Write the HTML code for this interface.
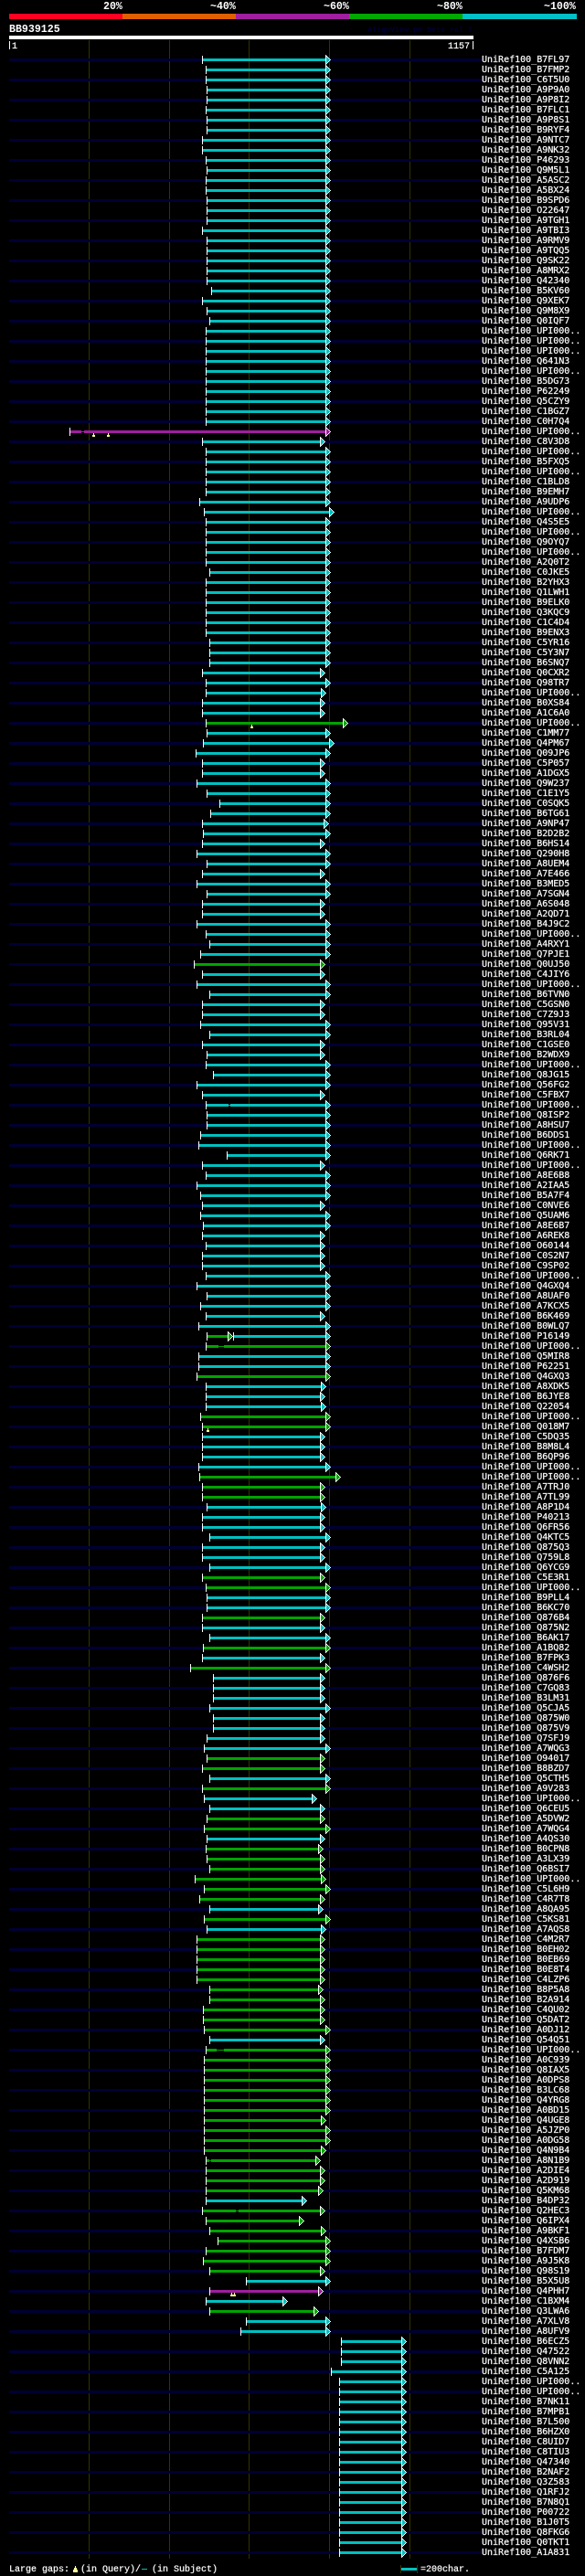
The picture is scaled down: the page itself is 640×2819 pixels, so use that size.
<!DOCTYPE html>
<html>
<head>
<meta charset="utf-8">
<style>
html,body{margin:0;padding:0;background:#000}
body{position:relative;width:640px;height:2819px;overflow:hidden;font-family:"Liberation Mono",monospace;color:#fff}
.a{position:absolute}
.h{position:absolute;font-weight:bold;font-size:11.6px;line-height:13px;white-space:pre}
.n{position:absolute;font-size:10px;line-height:11px;white-space:pre;-webkit-text-stroke:.2px #fff}
.gl{position:absolute;top:44px;height:2756px;width:1px;background:#333300}
#bands{position:absolute;left:10px;top:64px;width:517px;height:2732px;background:repeating-linear-gradient(#000033 0,#000033 3px,transparent 3px,transparent 22px)}
svg{position:absolute;left:0;top:0;shape-rendering:crispEdges}
svg path{fill:none;stroke:#00c0c0;stroke-width:3;marker-start:url(#t);marker-end:url(#ac)}
svg path.g{stroke:#00a400;marker-end:url(#ag)}
svg path.p{stroke:#a01ea0;marker-end:url(#ap)}
svg path.x{stroke:#000;marker:none}
svg path.y{stroke-width:1;marker:none}
svg path.yg{stroke:#00a400;stroke-width:1;marker:none}
svg path.yp{stroke:#a01ea0;stroke-width:1;marker:none}
svg .q{fill:#ffff99}
</style>
</head>
<body>
<div class="h" style="left:113px;top:1px">20%</div>
<div class="h" style="left:230px;top:1px">~40%</div>
<div class="h" style="left:354px;top:1px">~60%</div>
<div class="h" style="left:478px;top:1px">~80%</div>
<div class="h" style="left:595px;top:1px">~100%</div>
<div class="a" style="left:10px;top:15px;width:124px;height:6px;background:#ff0020"></div>
<div class="a" style="left:134px;top:15px;width:124px;height:6px;background:#e06000"></div>
<div class="a" style="left:258px;top:15px;width:124px;height:6px;background:#a01ea0"></div>
<div class="a" style="left:382px;top:15px;width:124px;height:6px;background:#00a800"></div>
<div class="a" style="left:506px;top:15px;width:125px;height:6px;background:#00c0c8"></div>
<div class="h" style="left:10px;top:26px">BB939125</div>
<div class="h" style="left:402px;top:27px;color:#000038;font-size:8.33px;letter-spacing:0">AlignView.pm Beta rel.7</div>
<div class="a" style="left:10px;top:39px;width:508px;height:4px;background:#fff"></div>
<div class="a" style="left:10px;top:45px;width:1px;height:9px;background:#fff"></div>
<div class="n" style="left:13px;top:46px">1</div>
<div class="n" style="left:490px;top:46px">1157</div>
<div class="a" style="left:517px;top:45px;width:1px;height:9px;background:#fff"></div>

<div class="gl" style="left:97px"></div>
<div class="gl" style="left:185px"></div>
<div class="gl" style="left:272px"></div>
<div class="gl" style="left:360px"></div>
<div class="gl" style="left:448px"></div>
<div id="bands"></div>

<svg width="640" height="2819" viewBox="0 0 640 2819">
<defs>
<polygon id="w" fill="#fff" points="0,0 1,0 1,1 2,1 2,2 3,2 3,3 4,3 4,4 5,4 5,5 6,5 6,6 5,6 5,7 4,7 4,8 3,8 3,9 2,9 2,10 1,10 1,11 0,11"/>
<polygon id="i" points="1,2 2,2 2,3 3,3 3,4 4,4 4,5 5,5 5,6 4,6 4,7 3,7 3,8 2,8 2,9 1,9"/>
<marker id="t" markerUnits="userSpaceOnUse" markerWidth="1" markerHeight="9" refX="0" refY="4.5" overflow="visible"><rect width="1" height="9" fill="#fff"/></marker>
<marker id="ac" markerUnits="userSpaceOnUse" markerWidth="8" markerHeight="11" refX="0" refY="5.5" overflow="visible"><use href="#w"/><use href="#i" fill="#00c0c0"/></marker>
<marker id="ag" markerUnits="userSpaceOnUse" markerWidth="8" markerHeight="11" refX="0" refY="5.5" overflow="visible"><use href="#w"/><use href="#i" fill="#00a400"/></marker>
<marker id="ap" markerUnits="userSpaceOnUse" markerWidth="8" markerHeight="11" refX="0" refY="5.5" overflow="visible"><use href="#w"/><use href="#i" fill="#a01ea0"/></marker>
</defs>
<path d="M221 65.5H356"/><path d="M225 76.5H356"/><path d="M225 87.5H356"/><path d="M226 98.5H356"/><path d="M226 109.5H356"/><path d="M225 120.5H356"/><path d="M226 131.5H356"/><path d="M226 142.5H356"/><path d="M221 153.5H356"/><path d="M221 164.5H356"/>
<path d="M225 175.5H356"/><path d="M226 186.5H356"/><path d="M225 197.5H356"/><path d="M225 208.5H356"/><path d="M226 219.5H356"/><path d="M226 230.5H356"/><path d="M226 241.5H356"/><path d="M221 252.5H356"/><path d="M226 263.5H356"/><path d="M226 274.5H356"/>
<path d="M226 285.5H356"/><path d="M226 296.5H356"/><path d="M226 307.5H356"/><path d="M231 318.5H356"/><path d="M221 329.5H356"/><path d="M226 340.5H356"/><path d="M229 351.5H356"/><path d="M225 362.5H356"/><path d="M225 373.5H356"/><path d="M225 384.5H356"/>
<path d="M225 395.5H356"/><path d="M225 406.5H356"/><path d="M225 417.5H356"/><path d="M225 428.5H356"/><path d="M225 439.5H356"/><path d="M225 450.5H356"/><path d="M225 461.5H356"/><path class="p" d="M76 472.5H356"/><path d="M221 483.5H350"/><path d="M225 494.5H356"/>
<path d="M225 505.5H356"/><path d="M225 516.5H356"/><path d="M225 527.5H356"/><path d="M225 538.5H356"/><path d="M218 549.5H356"/><path d="M223 560.5H360"/><path d="M225 571.5H356"/><path d="M225 582.5H356"/><path d="M225 593.5H356"/><path d="M225 604.5H356"/>
<path d="M225 615.5H356"/><path d="M229 626.5H356"/><path d="M225 637.5H356"/><path d="M225 648.5H356"/><path d="M225 659.5H356"/><path d="M225 670.5H356"/><path d="M225 681.5H356"/><path d="M225 692.5H356"/><path d="M229 703.5H356"/><path d="M229 714.5H356"/>
<path d="M229 725.5H356"/><path d="M221 736.5H350"/><path d="M225 747.5H356"/><path d="M225 758.5H351"/><path d="M221 769.5H350"/><path d="M221 780.5H350"/><path class="g" d="M225 791.5H375"/><path d="M226 802.5H356"/><path d="M222 813.5H360"/><path d="M214 824.5H356"/>
<path d="M221 835.5H350"/><path d="M221 846.5H350"/><path d="M215 857.5H356"/><path d="M226 868.5H356"/><path d="M240 879.5H356"/><path d="M230 890.5H356"/><path d="M221 901.5H354"/><path d="M222 912.5H356"/><path d="M221 923.5H350"/><path d="M215 934.5H356"/>
<path d="M226 945.5H356"/><path d="M221 956.5H350"/><path d="M215 967.5H356"/><path d="M226 978.5H356"/><path d="M221 989.5H350"/><path d="M221 1000.5H350"/><path d="M215 1011.5H356"/><path d="M225 1022.5H356"/><path d="M229 1033.5H356"/><path d="M219 1044.5H356"/>
<path class="g" d="M212 1055.5H350"/><path d="M221 1066.5H350"/><path d="M215 1077.5H356"/><path d="M229 1088.5H356"/><path d="M221 1099.5H350"/><path d="M221 1110.5H350"/><path d="M219 1121.5H356"/><path d="M229 1132.5H356"/><path d="M221 1143.5H350"/><path d="M226 1154.5H350"/>
<path d="M225 1165.5H356"/><path d="M233 1176.5H356"/><path d="M215 1187.5H356"/><path d="M221 1198.5H350"/><path d="M225 1209.5H356"/><path d="M226 1220.5H356"/><path d="M226 1231.5H356"/><path d="M219 1242.5H356"/><path d="M217 1253.5H356"/><path d="M248 1264.5H356"/>
<path d="M221 1275.5H350"/><path d="M225 1286.5H356"/><path d="M215 1297.5H356"/><path d="M219 1308.5H356"/><path d="M221 1319.5H350"/><path d="M219 1330.5H356"/><path d="M222 1341.5H356"/><path d="M221 1352.5H350"/><path d="M225 1363.5H350"/><path d="M221 1374.5H350"/>
<path d="M221 1385.5H350"/><path d="M225 1396.5H356"/><path d="M215 1407.5H356"/><path d="M226 1418.5H356"/><path d="M219 1429.5H356"/><path d="M225 1440.5H350"/><path d="M217 1451.5H356"/><path d="M255 1462.5H356"/><path class="g" d="M226 1462.5H249"/><path class="g" d="M225 1473.5H356"/><path d="M217 1484.5H356"/>
<path d="M217 1495.5H356"/><path class="g" d="M215 1506.5H356"/><path d="M225 1517.5H351"/><path d="M225 1528.5H350"/><path d="M225 1539.5H351"/><path class="g" d="M219 1550.5H356"/><path class="g" d="M221 1561.5H356"/><path d="M221 1572.5H350"/><path d="M221 1583.5H350"/><path d="M221 1594.5H350"/>
<path d="M217 1605.5H356"/><path class="g" d="M218 1616.5H367"/><path class="g" d="M221 1627.5H350"/><path class="g" d="M221 1638.5H350"/><path d="M226 1649.5H351"/><path d="M221 1660.5H350"/><path d="M221 1671.5H350"/><path d="M229 1682.5H356"/><path d="M221 1693.5H350"/><path d="M221 1704.5H350"/>
<path d="M229 1715.5H356"/><path class="g" d="M221 1726.5H350"/><path class="g" d="M225 1737.5H356"/><path d="M226 1748.5H356"/><path d="M226 1759.5H356"/><path class="g" d="M221 1770.5H350"/><path d="M221 1781.5H350"/><path d="M229 1792.5H356"/><path class="g" d="M222 1803.5H356"/><path d="M221 1814.5H350"/>
<path class="g" d="M208 1825.5H356"/><path d="M233 1836.5H350"/><path d="M233 1847.5H350"/><path d="M233 1858.5H350"/><path d="M229 1869.5H356"/><path d="M233 1880.5H350"/><path d="M233 1891.5H350"/><path d="M226 1902.5H350"/><path d="M223 1913.5H356"/><path class="g" d="M226 1924.5H350"/>
<path class="g" d="M221 1935.5H350"/><path d="M229 1946.5H356"/><path class="g" d="M221 1957.5H356"/><path d="M223 1968.5H341"/><path d="M229 1979.5H350"/><path class="g" d="M226 1990.5H350"/><path class="g" d="M223 2001.5H356"/><path d="M226 2012.5H350"/><path class="g" d="M225 2023.5H348"/><path class="g" d="M226 2034.5H350"/>
<path class="g" d="M229 2045.5H350"/><path class="g" d="M213 2056.5H351"/><path class="g" d="M223 2067.5H356"/><path class="g" d="M218 2078.5H350"/><path d="M229 2089.5H348"/><path class="g" d="M223 2100.5H356"/><path d="M226 2111.5H351"/><path class="g" d="M215 2122.5H350"/><path class="g" d="M215 2133.5H350"/><path class="g" d="M215 2144.5H350"/>
<path class="g" d="M215 2155.5H350"/><path class="g" d="M215 2166.5H350"/><path class="g" d="M229 2177.5H348"/><path class="g" d="M229 2188.5H350"/><path class="g" d="M222 2199.5H350"/><path class="g" d="M222 2210.5H350"/><path class="g" d="M223 2221.5H356"/><path d="M229 2232.5H350"/><path class="g" d="M225 2243.5H356"/><path class="g" d="M223 2254.5H356"/>
<path class="g" d="M223 2265.5H356"/><path class="g" d="M223 2276.5H356"/><path class="g" d="M223 2287.5H356"/><path class="g" d="M223 2298.5H356"/><path class="g" d="M223 2309.5H356"/><path class="g" d="M223 2320.5H351"/><path class="g" d="M223 2331.5H356"/><path class="g" d="M223 2342.5H356"/><path class="g" d="M223 2353.5H351"/><path class="g" d="M225 2364.5H345"/>
<path class="g" d="M225 2375.5H350"/><path class="g" d="M225 2386.5H350"/><path class="g" d="M225 2397.5H348"/><path d="M225 2408.5H330"/><path class="g" d="M221 2419.5H350"/><path class="g" d="M225 2430.5H327"/><path class="g" d="M229 2441.5H351"/><path class="g" d="M238 2452.5H356"/><path class="g" d="M225 2463.5H356"/><path class="g" d="M222 2474.5H356"/>
<path class="g" d="M229 2485.5H350"/><path d="M269 2496.5H356"/><path class="p" d="M229 2507.5H348"/><path d="M225 2518.5H309"/><path class="g" d="M229 2529.5H343"/><path d="M269 2540.5H356"/><path d="M263 2551.5H356"/><path d="M373 2562.5H439"/><path d="M373 2573.5H439"/><path d="M373 2584.5H439"/>
<path d="M362 2595.5H439"/><path d="M371 2606.5H439"/><path d="M371 2617.5H439"/><path d="M371 2628.5H439"/><path d="M371 2639.5H439"/><path d="M371 2650.5H439"/><path d="M371 2661.5H439"/><path d="M371 2672.5H439"/><path d="M371 2683.5H439"/><path d="M371 2694.5H439"/>
<path d="M371 2705.5H439"/><path d="M371 2716.5H439"/><path d="M371 2727.5H439"/><path d="M371 2738.5H439"/><path d="M371 2749.5H439"/><path d="M371 2760.5H439"/><path d="M371 2771.5H439"/><path d="M371 2782.5H439"/><path d="M371 2793.5H439"/>

<path class="x" d="M89 472.5h3M250 1209.5h2M239 1473.5h6M237 2243.5h8M229 2364.5h2M258 2419.5h3"/>
<path class="yp" d="M89 472.5h3"/>
<path class="y" d="M250 1209.5h2"/>
<path class="yg" d="M239 1473.5h6M237 2243.5h8M229 2364.5h2M258 2419.5h3"/>

<g class="q">
<rect x="102" y="474" width="1" height="2"/><rect x="101" y="476" width="3" height="2"/>
<rect x="118" y="474" width="1" height="2"/><rect x="117" y="476" width="3" height="2"/>
<rect x="275" y="793" width="1" height="2"/><rect x="274" y="795" width="3" height="2"/>
<rect x="227" y="1563" width="1" height="2"/><rect x="226" y="1565" width="3" height="2"/>
<rect x="253" y="2509" width="1" height="2"/><rect x="256" y="2509" width="1" height="2"/><rect x="252" y="2511" width="6" height="2"/>
<rect x="82" y="2808" width="1" height="2"/><rect x="81" y="2810" width="3" height="2"/><rect x="80" y="2812" width="5" height="3"/>
</g>
<rect x="155" y="2811" width="6" height="1" fill="#00c0c0"/>
<rect x="438" y="2807" width="1" height="9" fill="#333300"/>
<rect x="456" y="2807" width="1" height="9" fill="#333300"/>
<rect x="439" y="2810" width="17" height="3" fill="#00c0c0"/>
</svg>

<div class="n" style="left:10px;top:2807px">Large gaps:</div>
<div class="n" style="left:88px;top:2807px">(in Query)/</div>
<div class="n" style="left:166px;top:2807px">(in Subject)</div>
<div class="n" style="left:460px;top:2807px">=200char.</div>

<pre class="n" style="left:527px;top:60px;margin:0">UniRef100_B7FL97
UniRef100_B7FMP2
UniRef100_C6T5U0
UniRef100_A9P9A0
UniRef100_A9P8I2
UniRef100_B7FLC1
UniRef100_A9P8S1
UniRef100_B9RYF4
UniRef100_A9NTC7
UniRef100_A9NK32
UniRef100_P46293
UniRef100_Q9M5L1
UniRef100_A5ASC2
UniRef100_A5BX24
UniRef100_B9SPD6
UniRef100_O22647
UniRef100_A9TGH1
UniRef100_A9TBI3
UniRef100_A9RMV9
UniRef100_A9TQQ5
UniRef100_Q9SK22
UniRef100_A8MRX2
UniRef100_Q42340
UniRef100_B5KV60
UniRef100_Q9XEK7
UniRef100_Q9M8X9
UniRef100_Q0IQF7
UniRef100_UPI000..
UniRef100_UPI000..
UniRef100_UPI000..
UniRef100_Q641N3
UniRef100_UPI000..
UniRef100_B5DG73
UniRef100_P62249
UniRef100_Q5CZY9
UniRef100_C1BGZ7
UniRef100_C0H7Q4
UniRef100_UPI000..
UniRef100_C8V3D8
UniRef100_UPI000..
UniRef100_B5FXQ5
UniRef100_UPI000..
UniRef100_C1BLD8
UniRef100_B9EMH7
UniRef100_A9UDP6
UniRef100_UPI000..
UniRef100_Q4S5E5
UniRef100_UPI000..
UniRef100_Q9OYQ7
UniRef100_UPI000..
UniRef100_A2Q0T2
UniRef100_C0JKE5
UniRef100_B2YHX3
UniRef100_Q1LWH1
UniRef100_B9ELK0
UniRef100_Q3KQC9
UniRef100_C1C4D4
UniRef100_B9ENX3
UniRef100_C5YR16
UniRef100_C5Y3N7
UniRef100_B6SNQ7
UniRef100_Q0CXR2
UniRef100_Q98TR7
UniRef100_UPI000..
UniRef100_B0XS84
UniRef100_A1C6A0
UniRef100_UPI000..
UniRef100_C1MM77
UniRef100_Q4PM67
UniRef100_Q09JP6
UniRef100_C5P057
UniRef100_A1DGX5
UniRef100_Q9W237
UniRef100_C1E1Y5
UniRef100_C0SQK5
UniRef100_B6TG61
UniRef100_A9NP47
UniRef100_B2D2B2
UniRef100_B6HS14
UniRef100_Q290H8
UniRef100_A8UEM4
UniRef100_A7E466
UniRef100_B3MED5
UniRef100_A7SGN4
UniRef100_A6S048
UniRef100_A2QD71
UniRef100_B4J9C2
UniRef100_UPI000..
UniRef100_A4RXY1
UniRef100_Q7PJE1
UniRef100_Q0UJ50
UniRef100_C4JIY6
UniRef100_UPI000..
UniRef100_B6TVN0
UniRef100_C5GSN0
UniRef100_C7Z9J3
UniRef100_Q95V31
UniRef100_B3RL04
UniRef100_C1GSE0
UniRef100_B2WDX9
UniRef100_UPI000..
UniRef100_Q8JG15
UniRef100_Q56FG2
UniRef100_C5FBX7
UniRef100_UPI000..
UniRef100_Q8ISP2
UniRef100_A8HSU7
UniRef100_B6DDS1
UniRef100_UPI000..
UniRef100_Q6RK71
UniRef100_UPI000..
UniRef100_A8E6B8
UniRef100_A2IAA5
UniRef100_B5A7F4
UniRef100_C0NVE6
UniRef100_Q5UAM6
UniRef100_A8E6B7
UniRef100_A6REK8
UniRef100_O60144
UniRef100_C0S2N7
UniRef100_C9SP02
UniRef100_UPI000..
UniRef100_Q4GXQ4
UniRef100_A8UAF0
UniRef100_A7KCX5
UniRef100_B6K469
UniRef100_B0WLQ7
UniRef100_P16149
UniRef100_UPI000..
UniRef100_Q5MIR8
UniRef100_P62251
UniRef100_Q4GXQ3
UniRef100_A8XDK5
UniRef100_B6JYE8
UniRef100_Q22054
UniRef100_UPI000..
UniRef100_Q018M7
UniRef100_C5DQ35
UniRef100_B8M8L4
UniRef100_B6QP96
UniRef100_UPI000..
UniRef100_UPI000..
UniRef100_A7TRJ0
UniRef100_A7TL99
UniRef100_A8P1D4
UniRef100_P40213
UniRef100_Q6FR56
UniRef100_Q4KTC5
UniRef100_Q875Q3
UniRef100_Q759L8
UniRef100_Q6YCG9
UniRef100_C5E3R1
UniRef100_UPI000..
UniRef100_B9PLL4
UniRef100_B6KC70
UniRef100_Q876B4
UniRef100_Q875N2
UniRef100_B6AK17
UniRef100_A1BQ82
UniRef100_B7FPK3
UniRef100_C4WSH2
UniRef100_Q876F6
UniRef100_C7GQ83
UniRef100_B3LM31
UniRef100_Q5CJA5
UniRef100_Q875W0
UniRef100_Q875V9
UniRef100_Q7SFJ9
UniRef100_A7WQG3
UniRef100_O94017
UniRef100_B8BZD7
UniRef100_Q5CTH5
UniRef100_A9V283
UniRef100_UPI000..
UniRef100_Q6CEU5
UniRef100_A5DVW2
UniRef100_A7WQG4
UniRef100_A4QS30
UniRef100_B0CPN8
UniRef100_A3LX39
UniRef100_Q6BSI7
UniRef100_UPI000..
UniRef100_C5L6H9
UniRef100_C4R7T8
UniRef100_A8QA95
UniRef100_C5KS81
UniRef100_A7AQS8
UniRef100_C4M2R7
UniRef100_B0EH02
UniRef100_B0EB69
UniRef100_B0E8T4
UniRef100_C4LZP6
UniRef100_B8P5A8
UniRef100_B2A914
UniRef100_C4QU02
UniRef100_Q5DAT2
UniRef100_A0DJ12
UniRef100_Q54Q51
UniRef100_UPI000..
UniRef100_A0C939
UniRef100_Q8IAX5
UniRef100_A0DPS8
UniRef100_B3LC68
UniRef100_Q4YRG8
UniRef100_A0BD15
UniRef100_Q4UGE8
UniRef100_A5JZP0
UniRef100_A0DG58
UniRef100_Q4N9B4
UniRef100_A8N1B9
UniRef100_A2DIE4
UniRef100_A2D919
UniRef100_Q5KM68
UniRef100_B4DP32
UniRef100_Q2HEC3
UniRef100_Q6IPX4
UniRef100_A9BKF1
UniRef100_Q4XSB6
UniRef100_B7FDM7
UniRef100_A9J5K8
UniRef100_Q98S19
UniRef100_B5X5U8
UniRef100_Q4PHH7
UniRef100_C1BXM4
UniRef100_Q3LWA6
UniRef100_A7XLV8
UniRef100_A8UFV9
UniRef100_B6ECZ5
UniRef100_Q47522
UniRef100_Q8VNN2
UniRef100_C5A125
UniRef100_UPI000..
UniRef100_UPI000..
UniRef100_B7NK11
UniRef100_B7MPB1
UniRef100_B7L500
UniRef100_B6HZX0
UniRef100_C8UID7
UniRef100_C8TIU3
UniRef100_Q47340
UniRef100_B2NAF2
UniRef100_Q3Z583
UniRef100_Q1RFJ2
UniRef100_B7N8Q1
UniRef100_P00722
UniRef100_B1J0T5
UniRef100_Q8FKG6
UniRef100_Q0TKT1
UniRef100_A1A831</pre>
</body>
</html>
